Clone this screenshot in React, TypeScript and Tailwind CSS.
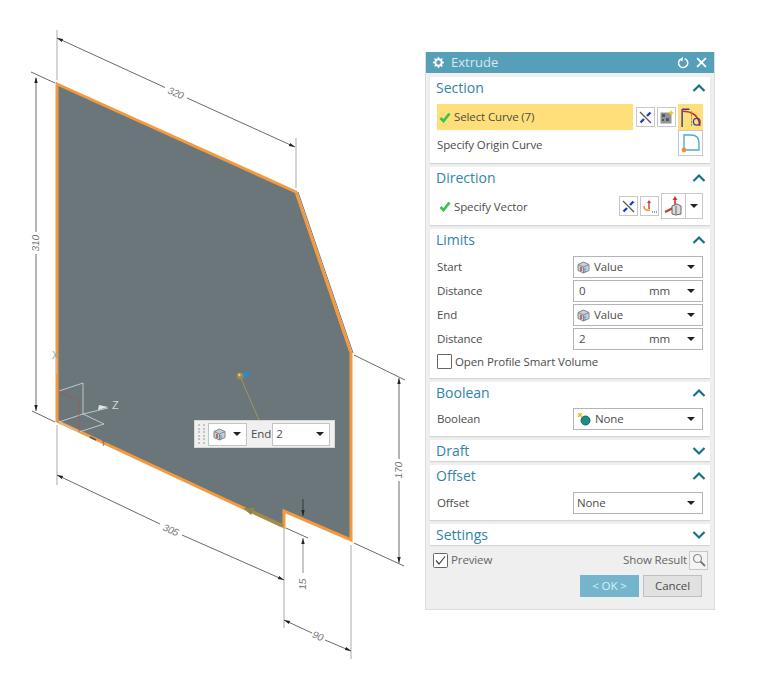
import type { ReactNode } from "react";

const font = { fontFamily: '"Open Sans", sans-serif' };

function Chevron({ open }: { open: boolean }) {
  return (
    <svg width="14" height="10" viewBox="0 0 14 10" fill="none" className="shrink-0">
      <path
        d={open ? "M1.5 8 7 2.5 12.5 8" : "M1.5 2 7 7.5 12.5 2"}
        stroke="#17708f"
        strokeWidth="2.2"
      />
    </svg>
  );
}

function Section({
  title,
  open = true,
  height,
  children,
}: {
  title: string;
  open?: boolean;
  height: string;
  children?: ReactNode;
}) {
  return (
    <section className={`bg-white shadow-[0_1px_1px_#d4d4d4] ${height}`}>
      <div className="flex h-[22px] items-center justify-between pl-[6px] pr-[4px]">
        <h2 className="text-[14px] leading-none tracking-normal text-[#2f84a8]">{title}</h2>
        <Chevron open={open} />
      </div>
      {children}
    </section>
  );
}

function Caret() {
  return <span className="h-0 w-0 border-x-[4px] border-t-[4px] border-x-transparent border-t-[#222]" />;
}

function CubeIcon() {
  return (
    <svg width="13" height="13" viewBox="0 0 13 13" className="shrink-0">
      <path d="M6.5 1 12 3.5v6L6.5 12 1 9.5v-6z" fill="#c9ced2" stroke="#7d8a92" />
      <path d="M1 3.5 6.5 6 12 3.5M6.5 6v6" fill="none" stroke="#7d8a92" />
      <path d="M4 6v4" stroke="#d0352b" strokeWidth="1.4" />
      <path d="M8 7v4" stroke="#4a9fd0" strokeWidth="1.2" />
    </svg>
  );
}

function BoolIcon() {
  return (
    <svg width="14" height="14" viewBox="0 0 14 14" className="shrink-0">
      <circle cx="8.5" cy="8.5" r="4.5" fill="#1f8f7f" stroke="#16665b" />
      <path d="M3 0.5v5M0.5 3h5M1 1l4 4M5 1 1 5" stroke="#d9c21f" strokeWidth="1" />
    </svg>
  );
}

function Select({ icon, children }: { icon?: ReactNode; children: ReactNode }) {
  return (
    <div className="flex h-[22px] w-[130px] items-center border border-[#b4b4b4] bg-white pl-[3px] pr-[7px]">
      <span className="flex flex-1 items-center gap-[4px] text-[#4d4d4d]">
        {icon}
        {children}
      </span>
      <Caret />
    </div>
  );
}

function Field({ label, children }: { label: string; children: ReactNode }) {
  return (
    <div className="flex h-[22px] items-center justify-between text-[#4d4d4d]">
      <span>{label}</span>
      {children}
    </div>
  );
}

function DistanceInput({ value }: { value: string }) {
  return (
    <div className="flex h-[22px] w-[130px] items-center border border-[#b4b4b4] bg-white pl-[5px] pr-[7px] text-[#4d4d4d]">
      <span className="flex-1">{value}</span>
      <span className="mr-[17px]">mm</span>
      <Caret />
    </div>
  );
}

function IconButton({ children, large = false, active = false }: { children: ReactNode; large?: boolean; active?: boolean }) {
  const size = large ? "h-[26px] w-[25px]" : "h-[20px] w-[19px]";
  const tone = active ? "bg-[#ffdf7a]" : "border border-[#c8c8c8] bg-white";
  return <div className={`flex shrink-0 items-center justify-center ${size} ${tone}`}>{children}</div>;
}

function SnapIcon() {
  return (
    <svg width="15" height="15" viewBox="0 0 15 15">
      <path d="M2 2 13 13" stroke="#555" strokeWidth="1.3" />
      <path d="M2.5 12.5 6 9M9 6l3.5-3.5" stroke="#1f3fc4" strokeWidth="2.4" />
    </svg>
  );
}

function Check() {
  return (
    <svg width="12" height="11" viewBox="0 0 12 11" className="shrink-0">
      <path d="M1.5 6 4.5 9 10.5 1.5" fill="none" stroke="#3cc24f" strokeWidth="2.8" />
    </svg>
  );
}

function Arrow({ x, y, angle }: { x: number; y: number; angle: number }) {
  return <path d="M0 0 -6 -1.7 -6 1.7z" fill="#222" transform={`translate(${x} ${y}) rotate(${angle})`} />;
}

function Dim({ x, y, angle, children }: { x: number; y: number; angle: number; children: string }) {
  return (
    <text
      x={0}
      y={0}
      textAnchor="middle"
      dominantBaseline="central"
      fontSize="10"
      fill="#777"
      transform={`translate(${x} ${y}) rotate(${angle}) skewX(-8)`}
      style={{ fontFamily: '"Liberation Sans", sans-serif' }}
    >
      {children}
    </text>
  );
}

function Drawing() {
  return (
    <svg width="425" height="675" viewBox="0 0 425 675" className="shrink-0">
      <g stroke="#c4c4c4" strokeWidth="1.4" fill="none">
        <path d="M57 30V80M296 138V188M57 425V485M284 528V628M351 545V659" />
      </g>
      <g stroke="#444" strokeWidth="0.8" fill="none">
        <path d="M57 38 165 87.5M187 98 295 147" />
        <path d="M31 72 55 83M32 411 55 422" />
        <path d="M36 78V232M36 254V411" />
        <path d="M354 355 405 380M354 543 404 566" />
        <path d="M399 378V459M399 481V563" />
        <path d="M57 475 160 524M182 535 284 580" />
        <path d="M286 528 308 538" />
        <path d="M303 538V573" stroke="#777" />
        <path d="M284 620 312 633M325 640 351 651" />
      </g>
      <Arrow x={57} y={38} angle={204} />
      <Arrow x={295} y={147} angle={24} />
      <Arrow x={36} y={77} angle={-90} />
      <Arrow x={36} y={411} angle={90} />
      <Arrow x={399} y={378} angle={-90} />
      <Arrow x={399} y={563} angle={90} />
      <Arrow x={57} y={475} angle={204} />
      <Arrow x={284} y={580} angle={24} />
      <Arrow x={303} y={538} angle={-90} />
      <Arrow x={284} y={620} angle={204} />
      <Arrow x={351} y={651} angle={24} />
      <Dim x={176} y={93} angle={24}>320</Dim>
      <Dim x={36} y={243} angle={-90}>310</Dim>
      <Dim x={399} y={470} angle={-90}>170</Dim>
      <Dim x={171} y={530} angle={24}>305</Dim>
      <Dim x={303} y={584} angle={-90}>15</Dim>
      <Dim x={318} y={636} angle={24}>90</Dim>

      <path d="M298 192 353 353" stroke="#777" strokeWidth="1" fill="none" />
      <path
        d="M57 84 296 192 351 353V540L284 511V527L57 421Z"
        fill="#6a7679"
        stroke="#f39a3f"
        strokeWidth="3"
      />
      <path d="M303 499V516" stroke="#333" strokeWidth="0.9" />
      <Arrow x={303} y={516} angle={90} />

      {/* csys triad */}
      <g stroke="#c9cfd0" strokeWidth="0.9" fill="none">
        <path d="M59 391 83 383V414L59 422M83 414 104 424 79 432 59 422M56 354V374" />
        <path d="M83 414 108 408" />
      </g>
      <path d="M59 391 79 401V432" stroke="#a8554f" strokeWidth="0.8" fill="none" />
      <path d="M98 410 108 407 99 405z" fill="#e4e6e6" />
      <text x="112" y="409" fontSize="11" fill="#d4d8d8" style={{ fontFamily: '"Liberation Sans", sans-serif' }}>Z</text>
      <text x="52" y="359" fontSize="10" fill="#9aa0a0" style={{ fontFamily: '"Liberation Sans", sans-serif' }}>X</text>
      <text x="100" y="446" fontSize="10" fill="#777" style={{ fontFamily: '"Liberation Sans", sans-serif' }}>Y</text>
      <path d="M90 437 96 440" stroke="#5a5a50" strokeWidth="1.6" />

      {/* extrude handle */}
      <path d="M240 376 259 420" stroke="#a89a5c" strokeWidth="0.9" />
      <path d="M242 373 252 372.5 243 379z" fill="#1e90e0" />
      <circle cx="240" cy="376" r="3.4" fill="#a08a40" />
      <circle cx="239.3" cy="375" r="1.4" fill="#d8c884" />
      <path d="M283 526 250 510.5" stroke="#9c8c50" strokeWidth="3.4" />
      <path d="M243 508 255 508 251 515z" fill="#8f8350" />
    </svg>
  );
}

export default function App() {
  return (
    <div className="relative flex h-[675px] w-[764px] overflow-hidden bg-white text-[11.5px] tracking-[-0.12px]" style={font}>
      <Drawing />

      {/* on-screen input over the part */}
      <div className="absolute left-[194px] top-[420px] flex h-[28px] w-[141px] items-center border border-[#d8d8d8] bg-[#f0f0f0] pl-[3px] text-[#4d4d4d]">
        <div className="grid h-[20px] w-[8px] grid-cols-2 gap-[1px]">
          {Array.from({ length: 12 }).map((_, i) => (
            <span key={i} className="h-[2px] w-[2px] bg-[#c4c4c4]" />
          ))}
        </div>
        <div className="ml-[2px] flex h-[23px] w-[39px] items-center justify-between border border-[#c4c4c4] bg-white pl-[4px] pr-[5px]">
          <CubeIcon />
          <Caret />
        </div>
        <span className="ml-[4px]">End</span>
        <div className="ml-[1px] flex h-[23px] w-[58px] items-center justify-between border border-[#c4c4c4] bg-white pl-[3px] pr-[5px]">
          <span>2</span>
          <Caret />
        </div>
      </div>

      <aside className="mt-[52px] flex h-[558px] w-[290px] shrink-0 flex-col border-x border-b border-[#dcdcdc] bg-[#efefef]">
        <header className="flex h-[21px] items-center justify-between bg-[#569fb8] px-[7px] text-white">
          <div className="flex items-center gap-[7px]">
            <svg width="11" height="11" viewBox="0 0 11 11">
              <circle cx="5.5" cy="5.5" r="3.2" fill="none" stroke="#fff" strokeWidth="2" />
              <path d="M5.5 0v2M5.5 9v2M0 5.5h2M9 5.5h2M1.6 1.6 3 3M8 8l1.4 1.4M9.4 1.6 8 3M3 8 1.6 9.4" stroke="#fff" strokeWidth="1.4" />
            </svg>
            <h1 className="text-[13px] leading-none tracking-normal text-[#d8e9ef]">Extrude</h1>
          </div>
          <div className="flex items-center gap-[7px]">
            <svg width="12" height="12" viewBox="0 0 11 11" fill="none">
              <path d="M3 2.2A4.2 4.2 0 1 0 7 1.5" stroke="#fff" strokeWidth="1.4" />
              <path d="M5.5 0 2 2.2l3 2z" fill="#fff" />
            </svg>
            <svg width="11" height="11" viewBox="0 0 10 10">
              <path d="M1 1 9 9M9 1 1 9" stroke="#fff" strokeWidth="1.7" />
            </svg>
          </div>
        </header>

        <div className="flex flex-1 flex-col gap-[4px] px-[4px] pt-[4px]">
          <Section title="Section" height="h-[86px]">
            <div className="px-[7px] pt-[5px]">
              <div className="flex h-[26px] items-center">
                <div className="flex h-full w-[196px] items-center gap-[3px] bg-[#ffdf7a] pl-[2px] text-[#4d4d4d]">
                  <Check />
                  <span>Select Curve (7)</span>
                </div>
                <div className="ml-[3px] flex items-center gap-[2px]">
                  <IconButton><SnapIcon /></IconButton>
                  <IconButton>
                    <svg width="15" height="15" viewBox="0 0 15 15">
                      <rect x="1.5" y="2.5" width="11" height="11" fill="#8f9498" />
                      <path d="M3 4h3v3H3zM7 8h3v3H7zM3 9h2v2H3z" fill="#55595c" />
                      <path d="M12 0.5v5M9.5 3h5" stroke="#e9c92e" strokeWidth="1.4" />
                    </svg>
                  </IconButton>
                  <IconButton large active>
                    <svg width="24" height="23" viewBox="0 0 23 22" fill="none">
                      <path d="M3 3V20M3 3H10" stroke="#3a3f9e" strokeWidth="1.4" />
                      <path d="M3 5C12 5 19 9 20 19" stroke="#cf2d2d" strokeWidth="1.6" />
                      <path d="M12 5V20" stroke="#6aa35a" strokeWidth="1" strokeDasharray="2 1" />
                      <circle cx="17" cy="15" r="3.2" stroke="#3a3f9e" strokeWidth="1.2" />
                    </svg>
                  </IconButton>
                </div>
              </div>
              <div className="flex h-[26px] items-center justify-between text-[#4d4d4d]">
                <span className="pt-[3px]">Specify Origin Curve</span>
                <IconButton large>
                  <svg width="21" height="21" viewBox="0 0 21 21" fill="none">
                    <path d="M4 17V2H11C16 2 19 5 19 10V17H4" stroke="#4aa9d8" strokeWidth="1.4" />
                    <circle cx="4" cy="17" r="2.4" fill="#f0913a" />
                  </svg>
                </IconButton>
              </div>
            </div>
          </Section>

          <Section title="Direction" height="h-[58px]">
            <div className="mt-[4px] flex h-[26px] items-center pl-[9px] pr-[7px]">
              <Check />
              <span className="ml-[3px] flex-1 pt-[2px] text-[#4d4d4d]">Specify Vector</span>
              <div className="flex items-center gap-[2px]">
                <IconButton><SnapIcon /></IconButton>
                <IconButton>
                  <svg width="15" height="15" viewBox="0 0 15 15" fill="none">
                    <path d="M2 7C2 11 5 12 8 11" stroke="#e8962f" strokeWidth="1.6" />
                    <path d="M7 10V3" stroke="#d0352b" strokeWidth="1.4" />
                    <path d="M7 1 5 4h4z" fill="#d0352b" />
                    <path d="M10 13h1M12 13h1M14 13h1" stroke="#333" />
                  </svg>
                </IconButton>
                <div className="flex">
                  <IconButton large>
                    <svg width="22" height="22" viewBox="0 0 22 22" fill="none">
                      <path d="M2 17 10 13" stroke="#c23a2a" strokeWidth="2" />
                      <path d="M12 14V3" stroke="#d0352b" strokeWidth="1.6" />
                      <path d="M12 1 9.5 5h5z" fill="#d0352b" />
                      <path d="M9 19V11l5-2 4 2v8l-5 1z" stroke="#666" fill="#d8dadb" />
                      <path d="M13 11v8" stroke="#666" />
                    </svg>
                  </IconButton>
                  <div className="flex h-[26px] w-[17px] items-center justify-center border-y border-r border-[#c8c8c8] bg-white">
                    <Caret />
                  </div>
                </div>
              </div>
            </div>
          </Section>

          <Section title="Limits" height="h-[149px]">
            <div className="flex flex-col gap-[2px] px-[7px] pt-[5px]">
              <Field label="Start"><Select icon={<CubeIcon />}>Value</Select></Field>
              <Field label="Distance"><DistanceInput value="0" /></Field>
              <Field label="End"><Select icon={<CubeIcon />}>Value</Select></Field>
              <Field label="Distance"><DistanceInput value="2" /></Field>
              <label className="mt-[1px] flex items-center gap-[3px] text-[#4d4d4d]">
                <span className="h-[15px] w-[15px] rounded-[1px] border border-[#666] bg-white" />
                Open Profile Smart Volume
              </label>
            </div>
          </Section>

          <Section title="Boolean" height="h-[54px]">
            <div className="px-[7px] pt-[4px]">
              <Field label="Boolean"><Select icon={<BoolIcon />}>None</Select></Field>
            </div>
          </Section>

          <Section title="Draft" open={false} height="h-[21px]" />

          <Section title="Offset" height="h-[55px]">
            <div className="px-[7px] pt-[5px]">
              <Field label="Offset"><Select>None</Select></Field>
            </div>
          </Section>

          <Section title="Settings" open={false} height="h-[21px]" />

          <div className="flex h-[22px] items-center justify-between pl-[3px] pr-[2px] text-[#666]">
            <label className="flex items-center gap-[3px]">
              <svg width="15" height="15" viewBox="0 0 15 15" fill="none">
                <rect x="0.5" y="0.5" width="14" height="14" rx="1" fill="#fff" stroke="#666" />
                <path d="M3 7.5 6 11 12 3.5" stroke="#444" strokeWidth="1.2" />
              </svg>
              Preview
            </label>
            <div className="flex items-center gap-[2px]">
              <span>Show Result</span>
              <div className="flex h-[19px] w-[19px] items-center justify-center border border-[#c8c8c8] bg-[#f4f4f4]">
                <svg width="14" height="14" viewBox="0 0 14 14" fill="none">
                  <circle cx="5.5" cy="5.5" r="4" stroke="#8a8f93" strokeWidth="1.2" />
                  <path d="M8.5 8.5 13 13" stroke="#777" strokeWidth="1.8" />
                </svg>
              </div>
            </div>
          </div>

          <div className="mr-[8px] flex justify-end gap-[4px]">
            <button className="h-[22px] w-[59px] bg-[#74b5cd] text-[#dceef4]">&lt; OK &gt;</button>
            <button className="h-[22px] w-[59px] border border-[#c0c0c0] bg-[#e1e1e1] text-[#4d4d4d]">Cancel</button>
          </div>
        </div>
      </aside>
    </div>
  );
}
